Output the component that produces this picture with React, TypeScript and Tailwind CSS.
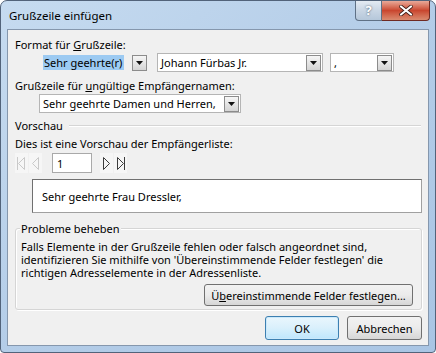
import React from 'react';

const DropArrow = () => (
  <div className="w-[15px] h-[16px] shrink-0 border border-[#8c8c8c] bg-gradient-to-b from-[#f6f6f6] to-[#d4d4d4] flex items-center justify-center">
    <svg width="7" height="4" viewBox="0 0 7 4">
      <path d="M0 0h7L3.5 4z" fill="#111" />
    </svg>
  </div>
);

const Combo = ({ className, children }: { className: string; children: React.ReactNode }) => (
  <div className={`h-[19px] shrink-0 flex items-center justify-between pl-[3px] pr-[1px] ${className}`}>
    <div className="whitespace-nowrap leading-[15px]">{children}</div>
    <DropArrow />
  </div>
);

const NavIcon = ({ dir, bar, on }: { dir: 'l' | 'r'; bar?: boolean; on: boolean }) => {
  const c = on ? '#3c3c3c' : '#c9c9c9';
  return (
    <div className="w-[13px] h-[20px] flex items-center justify-center bg-[#f6f6f6]">
      <svg width="11" height="15" viewBox="0 0 11 15">
        {dir === 'r' ? (
          <>
            <path d="M2.5 1.5L8.5 7.5L2.5 13.5Z" fill="none" stroke={c} />
            {bar && <path d="M9.5 1v13" stroke={c} />}
          </>
        ) : (
          <>
            <path d="M8.5 1.5L2.5 7.5L8.5 13.5Z" fill="none" stroke={c} />
            {bar && <path d="M1.5 1v13" stroke={c} />}
          </>
        )}
      </svg>
    </div>
  );
};

const Button = ({ className, children }: { className: string; children: React.ReactNode }) => (
  <div
    className={`flex items-center justify-center rounded-[3px] border leading-[15px] whitespace-nowrap ${className}`}
  >
    {children}
  </div>
);

export default function App() {
  return (
    <div className="w-[436px] h-[353px] overflow-hidden bg-white font-['Noto_Sans',sans-serif] text-[11px] text-black">
      <div className="w-[436px] h-[353px] flex flex-col rounded-t-[7px] rounded-b-[4px] border border-[#52637a] bg-gradient-to-br from-[#c6dbf0] via-[#b4cde8] to-[#a9c5e4] px-[6px] pb-[6px]">
        {/* title bar */}
        <div className="h-[28px] shrink-0 flex items-start justify-between">
          <div className="pt-[7px] pl-[2px] leading-[15px] text-[11.5px]">Grußzeile einfügen</div>
          <div className="flex -mr-[1px]">
            <div className="w-[27px] h-[20px] border border-[#5f7186] border-t-0 rounded-bl-[4px] bg-gradient-to-b from-[#e4ebf3] via-[#c9d6e4] to-[#b5c7da] flex items-center justify-center text-[13px] font-bold text-white [text-shadow:0_0_2px_#3d4d60]">
              ?
            </div>
            <div className="w-[48px] h-[20px] border border-[#6f2a22] border-t-0 border-l-0 rounded-br-[4px] bg-gradient-to-b from-[#e8a999] via-[#c9462f] to-[#d98a6f] flex items-center justify-center">
              <svg width="14" height="11" viewBox="0 0 14 11">
                <path d="M2 1.5L12 9.5M12 1.5L2 9.5" stroke="#3a1a14" strokeWidth="3.6" strokeLinecap="round" />
                <path d="M2 1.5L12 9.5M12 1.5L2 9.5" stroke="#ffffff" strokeWidth="2.2" strokeLinecap="round" />
              </svg>
            </div>
          </div>
        </div>

        {/* client area */}
        <div className="flex-1 min-h-0 border border-[#8597ad] bg-[#f0f0f0] flex flex-col pl-[7px] pr-[5px]">
          <div className="mt-[7px] leading-[15px]">
            Format für <span className="underline">G</span>rußzeile:
          </div>
          <div className="flex items-center mt-[1px] ml-[25px]">
            <Combo className="w-[108px]">
              <span className="bg-[#9ccaf2] pl-[1px] pr-[2px]">Sehr geehrte(r)</span>
            </Combo>
            <Combo className="w-[166px] ml-[9px] bg-white border border-[#b5b5b5]">Johann Fürbas Jr.</Combo>
            <Combo className="w-[64px] ml-[7px] bg-white border border-[#b5b5b5]">,</Combo>
          </div>
          <div className="mt-[6px] leading-[15px]">
            Grußzeile für <span className="underline">u</span>ngültige Empfängernamen:
          </div>
          <div className="flex mt-[1px] ml-[24px]">
            <Combo className="w-[202px] bg-white border border-[#b5b5b5]">Sehr geehrte Damen und Herren,</Combo>
          </div>

          <div className="flex items-center mt-[5px]">
            <div className="leading-[15px]">Vorschau</div>
            <div className="flex-1 ml-[6px] mr-[2px] border-t border-[#d5d5d5] border-b border-b-white" />
          </div>
          <div className="mt-[3px] leading-[15px]">Dies ist eine Vorschau der Empfängerliste:</div>
          <div className="flex items-center mt-[2px]">
            <NavIcon dir="l" bar on={false} />
            <div className="w-[1px]" />
            <NavIcon dir="l" on={false} />
            <div className="ml-[10px] w-[40px] h-[20px] bg-white border border-[#a9a9a9] pl-[4px] flex items-center leading-[15px]">
              1
            </div>
            <div className="w-[8px]" />
            <NavIcon dir="r" on />
            <div className="w-[1px]" />
            <NavIcon dir="r" bar on />
          </div>
          <div className="mt-[6px] ml-[17px] mr-[1px] h-[34px] shrink-0 bg-white border border-[#707070] border-r-[#a0a0a0] border-b-[#a0a0a0] flex items-center pl-[9px] leading-[15px]">
            Sehr geehrte Frau Dressler,
          </div>

          <div className="mt-[15px] mr-[1px] relative border border-[#d5d5d5] rounded-[3px] [box-shadow:inset_1px_1px_0_#fff,1px_1px_0_#fff] pt-[11px] pl-[5px] pr-[8px] pb-[3px]">
            <div className="absolute -top-[8px] left-[4px] px-[1px] bg-[#f0f0f0] leading-[15px]">Probleme beheben</div>
            <div className="leading-[13px] whitespace-nowrap">
              <div>Falls Elemente in der Grußzeile fehlen oder falsch angeordnet sind,</div>
              <div>identifizieren Sie mithilfe von 'Übereinstimmende Felder festlegen' die</div>
              <div>richtigen Adresselemente in der Adressenliste.</div>
            </div>
            <div className="flex justify-end mt-[5px]">
              <Button className="w-[209px] h-[22px] border-[#707070] bg-gradient-to-b from-[#f2f2f2] via-[#ebebeb] to-[#d6d6d6]">
                Ü<span className="underline">b</span>ereinstimmende Felder festlegen...
              </Button>
            </div>
          </div>

          <div className="flex justify-end mt-[6px] mr-[1px]">
            <Button className="w-[74px] h-[24px] border-[#3c7fb1] bg-gradient-to-b from-[#eaf6fd] via-[#d9f0fc] to-[#bee6fd] [box-shadow:inset_0_0_0_1px_#cbe9fb]">
              OK
            </Button>
            <Button className="w-[75px] h-[24px] ml-[8px] border-[#707070] bg-gradient-to-b from-[#f2f2f2] via-[#ebebeb] to-[#d6d6d6]">
              Abbrechen
            </Button>
          </div>
        </div>
      </div>
    </div>
  );
}
